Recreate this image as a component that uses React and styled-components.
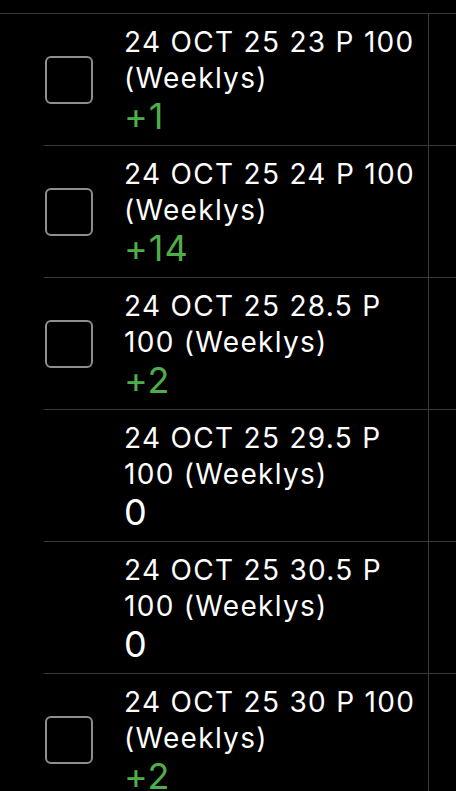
import React from "react";
import styled, { createGlobalStyle } from "styled-components";

const GlobalStyle = createGlobalStyle`
    html, body {
        margin: 0;
        padding: 0;
        background: #000;
    }
    body {
        font-family: Inter, "Noto Sans", "Liberation Sans", sans-serif;
        color: #fff;
        overflow: hidden;
    }
`;

const Page = styled.div`
    // top line sits at y=13
    padding-top: 13px;
    height: 791px;
    box-sizing: border-box;
    overflow: hidden;
`;

const List = styled.div`
    border-top: 1px solid #3a3a3c;
`;

const Row = styled.div`
    display: flex;
    margin-left: 44px;
    height: 132px;
    box-sizing: border-box;
    border-bottom: 1px solid #3a3a3c;
`;

const MainCell = styled.div`
    display: flex;
    align-items: center;
    width: 385px;
    flex: none;
    border-right: 1px solid #3a3a3c;
    box-sizing: border-box;
`;

const SideCell = styled.div`
    flex: 1;
`;

const CheckSlot = styled.div`
    width: 49px;
    flex: none;
    margin-right: 31px;
    padding-left: 1px;
    box-sizing: border-box;
    display: flex;
    align-items: center;
`;

const Checkbox = styled.div`
    width: 48px;
    height: 48px;
    box-sizing: border-box;
    border: 2px solid #8e8e90;
    border-radius: 6px;
`;

const Info = styled.div`
    width: 300px;
`;

const Title = styled.div`
    font-size: 28px;
    line-height: 36px;
    letter-spacing: 1.3px;
    font-weight: 400;
`;

const Qty = styled.div`
    font-size: 36px;
    line-height: 40px;
    letter-spacing: 1px;
    color: ${(p) => (p.positive ? "#4fae4a" : "#fff")};
`;

const positions = [
    { strike: "23", qty: 1, check: true },
    { strike: "24", qty: 14, check: true },
    { strike: "28.5", qty: 2, check: true },
    { strike: "29.5", qty: 0, check: false },
    { strike: "30.5", qty: 0, check: false },
    { strike: "30", qty: 2, check: true },
];

const PositionRow = ({ strike, qty, check }) => (
    <Row>
        <MainCell>
            <CheckSlot>{check && <Checkbox />}</CheckSlot>
            <Info>
                <Title>24 OCT 25 {strike} P 100 (Weeklys)</Title>
                <Qty positive={qty > 0}>{qty > 0 ? "+" + qty : qty}</Qty>
            </Info>
        </MainCell>
        <SideCell />
    </Row>
);

export default function App() {
    return (
        <>
            <GlobalStyle />
            <Page>
                <List>
                    {positions.map((p) => (
                        <PositionRow key={p.strike} {...p} />
                    ))}
                </List>
            </Page>
        </>
    );
}
